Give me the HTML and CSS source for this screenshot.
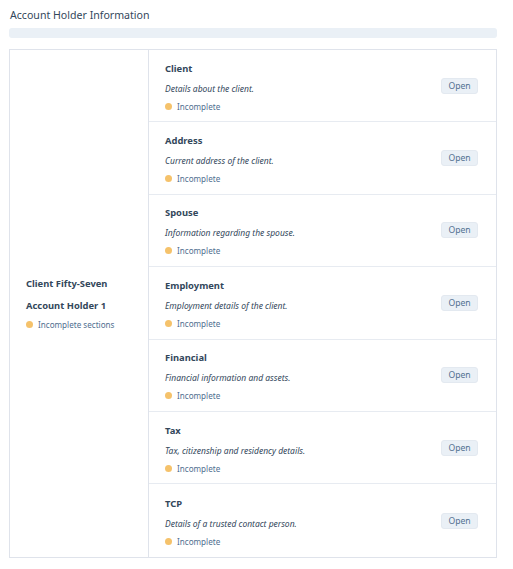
FILE: index.html
```html
<!DOCTYPE html>
<html>
<head>
<meta charset="utf-8">
<link rel="stylesheet" href="styles.css">
</head>
<body>
<div class="page">
  <h1 class="title">Account Holder Information</h1>
  <div class="bar"></div>
  <div class="box">
    <div class="holder">
      <div class="holder-name">Client Fifty-Seven</div>
      <div class="holder-role">Account Holder 1</div>
      <div class="status"><span class="dot"></span>Incomplete sections</div>
    </div>
    <div class="sections">
      <div class="row">
        <div class="info">
          <div class="name">Client</div>
          <div class="desc">Details about the client.</div>
          <div class="status"><span class="dot"></span>Incomplete</div>
        </div>
        <button class="open">Open</button>
      </div>
      <div class="row">
        <div class="info">
          <div class="name">Address</div>
          <div class="desc">Current address of the client.</div>
          <div class="status"><span class="dot"></span>Incomplete</div>
        </div>
        <button class="open">Open</button>
      </div>
      <div class="row">
        <div class="info">
          <div class="name">Spouse</div>
          <div class="desc">Information regarding the spouse.</div>
          <div class="status"><span class="dot"></span>Incomplete</div>
        </div>
        <button class="open">Open</button>
      </div>
      <div class="row">
        <div class="info">
          <div class="name">Employment</div>
          <div class="desc">Employment details of the client.</div>
          <div class="status"><span class="dot"></span>Incomplete</div>
        </div>
        <button class="open">Open</button>
      </div>
      <div class="row">
        <div class="info">
          <div class="name">Financial</div>
          <div class="desc">Financial information and assets.</div>
          <div class="status"><span class="dot"></span>Incomplete</div>
        </div>
        <button class="open">Open</button>
      </div>
      <div class="row">
        <div class="info">
          <div class="name">Tax</div>
          <div class="desc">Tax, citizenship and residency details.</div>
          <div class="status"><span class="dot"></span>Incomplete</div>
        </div>
        <button class="open">Open</button>
      </div>
      <div class="row">
        <div class="info">
          <div class="name">TCP</div>
          <div class="desc">Details of a trusted contact person.</div>
          <div class="status"><span class="dot"></span>Incomplete</div>
        </div>
        <button class="open">Open</button>
      </div>
    </div>
  </div>
</div>
</body>
</html>
```
FILE: styles.css
```css
* { box-sizing: border-box; }
body {
  margin: 0;
  background: #ffffff;
  font-family: "Noto Sans", "DejaVu Sans", sans-serif;
  color: #33475b;
}
.page {
  padding: 6px 16px 0 9px;
}
.title {
  margin: 0 0 0 1px;
  font-size: 10.6px;
  font-weight: 400;
  line-height: 18px;
  color: #33475b;
}
.bar {
  margin-top: 4px;
  height: 10px;
  background: #eaf0f6;
  border-radius: 3px;
}
.box {
  margin-top: 11px;
  display: flex;
  border: 1px solid #dfe3eb;
}
.holder {
  width: 139px;
  flex: none;
  border-right: 1px solid #dfe3eb;
  display: flex;
  flex-direction: column;
  justify-content: center;
  padding-left: 16px;
  padding-top: 2px;
}
.holder-name, .holder-role {
  font-size: 9.4px;
  font-weight: 700;
  line-height: 14px;
}
.holder-role { margin-top: 8px; }
.holder .status { margin-top: 5px; }
.sections {
  flex: 1;
  display: flex;
  flex-direction: column;
}
.row {
  height: 72.4px;
  display: flex;
  align-items: center;
  justify-content: space-between;
  padding: 0 18px 0 16px;
  border-bottom: 1px solid #e7ebf1;
}
.row:last-child { border-bottom: none; }
.info {
  display: flex;
  flex-direction: column;
  padding-top: 3px;
}
.name {
  font-size: 9.4px;
  font-weight: 700;
  line-height: 14px;
}
.desc {
  margin-top: 6px;
  font-size: 8.5px;
  font-style: italic;
  line-height: 13px;
}
.status {
  margin-top: 5px;
  display: flex;
  align-items: center;
  font-size: 8.1px;
  line-height: 13px;
  color: #516f90;
}
.dot {
  width: 7px;
  height: 7px;
  border-radius: 50%;
  background: #f5c26b;
  margin-right: 5px;
  flex: none;
}
.open {
  width: 37px;
  height: 16px;
  padding: 0;
  border: 1px solid #e3e9f0;
  border-radius: 3px;
  background: #eaf0f6;
  font-family: inherit;
  font-size: 8.6px;
  color: #516f90;
  line-height: 14px;
}
```
